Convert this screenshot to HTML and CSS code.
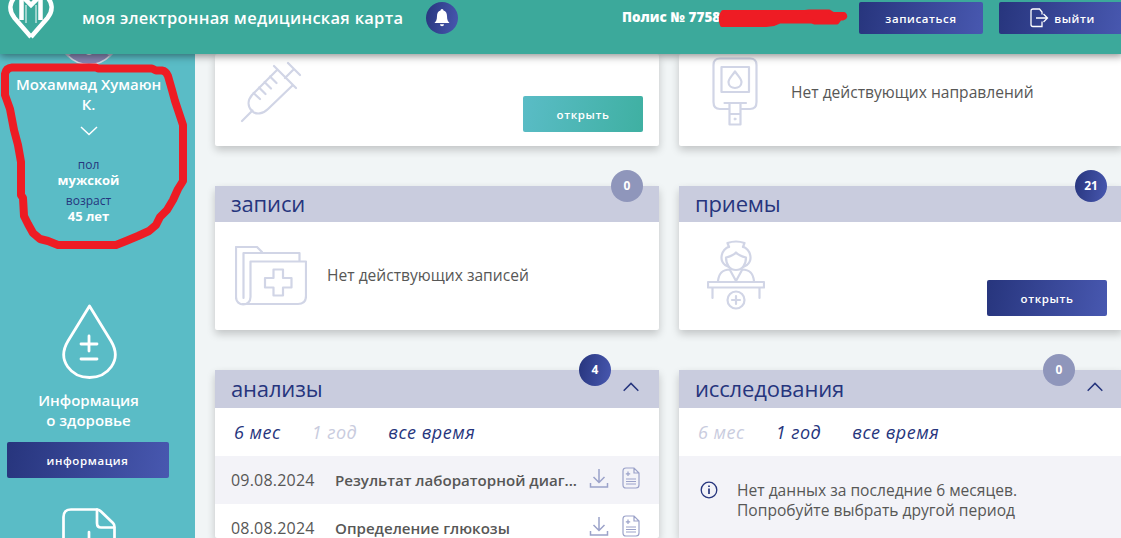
FILE: index.html
```html
<!DOCTYPE html>
<html lang="ru">
<head>
    <meta charset="UTF-8">
    <meta name="viewport" content="width=device-width, initial-scale=1.0">
    <title>Моя электронная медицинская карта</title>
    <link rel="stylesheet" href="styles.css">
</head>
<body>
<header class="header">
    <svg class="logo" width="46" height="42" viewBox="0 0 46 42" fill="none">
        <path d="M23 37 L6.500 18 C0 10 2 2 7 -3 M23 37 L39.500 18 C46 10 44 2 39 -3" stroke="#fff" stroke-width="4.500"/>
        <path d="M13.500 20 V-2 M32.500 20 V-2" stroke="#fff" stroke-width="4.500"/>
        <path d="M14 -4 L23 5 L32 -4" stroke="#fff" stroke-width="4.500"/>
        <path d="M18 23 V5 M28 23 V5" stroke="#fff" stroke-width="1"/>
    </svg>
    <div class="header-title">моя электронная медицинская карта</div>
    <div class="bell">
        <svg width="16" height="20" viewBox="0 0 16 20" fill="#fff">
            <path d="M8 1 a1.500 1.500 0 0 1 1.500 1.500 C12 3.200 13 5.500 13 8 c0 4 1 5.500 2.500 7 H.5 C2 13.500 3 12 3 8 c0-2.500 1-4.800 3.500-5.500 A1.500 1.500 0 0 1 8 1z"/>
            <path d="M6 16.200 h4 a2 2 0 0 1-4 0z"/>
        </svg>
    </div>
    <div class="policy">Полис № 7758</div>
    <button class="btn btn-sign">записаться</button>
    <button class="btn btn-exit">
        <svg width="19" height="20" viewBox="0 0 19 20" fill="none" stroke="#fff" stroke-width="1.300">
            <path d="M12 6.500 V4 L9.500 1 H3 Q1 1 1 3 V16.500 Q1 18.500 3 18.500 H12 V13.500 M6 10 H17.500 M13.500 6 L17.500 10 L13.500 14"/>
        </svg>
        <span>выйти</span>
    </button>
</header>

<div class="page">
    <!-- Patient sidebar -->
    <aside class="sidebar">
        <svg class="avatar" width="54" height="12" viewBox="0 0 54 12">
            <circle cx="27" cy="-19" r="29.500" fill="#8584b0" stroke="#d5d8e2" stroke-width="1.500"/>
            <path d="M3 0 H9 C7 1 6 2 8 4z M51 0 H45 C47 1 48 2 46 4z" fill="#b9b8cc"/>
            <path d="M24 0 h6 l-2 1h-2z" fill="#d5d8e2"/>
        </svg>
        <div class="patient-name">Мохаммад Хумаюн<br>К.</div>
        <svg class="toggle" width="18" height="10" viewBox="0 0 18 10" fill="none" stroke="#fff" stroke-width="1.500"><path d="M1 1 L9 8.500 L17 1"/></svg>
        <div class="label">пол</div>
        <div class="value">мужской</div>
        <div class="label">возраст</div>
        <div class="value">45 лет</div>

        <svg class="drop" width="56" height="78" viewBox="0 0 56 78" fill="none" stroke="#fff" stroke-width="2.800" stroke-linecap="round" stroke-linejoin="round">
            <path d="M28.500 3 L7 38 C-5 58 11 74.500 28.500 74.500 S62 58 50 38 Z"/>
            <path d="M28 33 V48 M20 41 H36 M20 56 H36"/>
        </svg>
        <div class="info-title">Информация<br>о здоровье</div>
        <button class="btn btn-info">информация</button>
        <svg class="doc" width="54" height="30" viewBox="0 0 54 30" fill="none" stroke="#fff" stroke-width="2.700" stroke-linecap="round">
            <path d="M1.500 34 V9 Q1.500 1.500 9 1.500 H35 Q37 1.500 39 3.500 L51 15 Q52.500 16.500 52.500 19 V34"/>
            <path d="M35 1.500 V15 Q35 19.500 39 19.500 H52 M27 24 V34"/>
        </svg>
    </aside>

    <main class="grid">
        <!-- Vaccination -->
        <section class="card card-cut">
            <svg class="icon icon-syringe" width="62" height="62" viewBox="0 0 62 62">
                <path d="M2 60 L12.500 49.500 M48 2 L60 14 M54 8 L45 17 M34 5 L56 27 M37 9 L12 34 C7 40 8 46 12 50 S23 53 28 48 L53 24 M13.500 32 L20 38 M19 26.500 L25.500 33 M24.500 21 L31 27.500 M30 15.500 L36.500 22"/>
            </svg>
            <button class="btn btn-open btn-green">открыть</button>
        </section>

        <!-- Referrals -->
        <section class="card card-cut">
            <svg class="icon icon-meter" width="46" height="70" viewBox="0 0 46 70">
                <path d="M17 52 H8 Q1.500 52 1.500 45 V8 Q1.500 1.500 8 1.500 H38 Q44.500 1.500 44.500 8 V45 Q44.500 52 38 52 H29"/>
                <path d="M9.500 10 H37 V35 H9.500z M12.500 46 H34 M17.500 47 V67.500 H28.500 V47 M17.500 57 H28.500"/>
                <path d="M23 14.500 C19 20 16.500 22 16.500 25 C16.500 33 29.500 33 29.500 25 C29.500 22 27 20 23 14.500z"/>
                <circle cx="23" cy="62" r="1" fill="#d1d5e6" stroke-width="1"/>
            </svg>
            <div class="empty">Нет действующих направлений</div>
        </section>

        <!-- Appointments -->
        <section class="card">
            <div class="card-head">записи<span class="badge badge-zero">0</span></div>
            <div class="card-body">
                <svg class="icon icon-folder" width="72" height="60" viewBox="0 0 72 60">
                    <path d="M8.500 52 V7 H64.500 V15 M1 51 V1 H22 L27 6 M1 51 C1 61 15.500 61 15.500 51 V15.500 H71 V50 Q71 58 63 58 H8"/>
                    <path d="M38.500 23.500 H48 V32 H56.500 V41.500 H48 V49.500 H38.500 V41.500 H30 V32 H38.500z"/>
                </svg>
                <div class="empty">Нет действующих записей</div>
            </div>
        </section>

        <!-- Visits -->
        <section class="card">
            <div class="card-head">приемы<span class="badge">21</span></div>
            <div class="card-body">
                <svg class="icon icon-doctor" width="58" height="70" viewBox="0 0 58 70">
                    <path d="M1 42 H57 V47.500 H1z M5.500 48 V58 M52.500 48 V58"/>
                    <circle cx="29" cy="60" r="8.500"/>
                    <path d="M29 56 V64 M25 60 H33"/>
                    <path d="M11 41 C12 33 15 30 23 29.500 M47 41 C46 33 43 30 35 29.500 M23 30 L29 41 L35 30"/>
                    <path d="M19 17.500 C23 16.500 27 15 29 12.500 C31 15 35 16.500 39 17.500 C39 25 35 30 29 30 S19 25 19 17.500z"/>
                    <path d="M22 7 L20.500 3 Q29 0 37.500 3 L36 7 M22 6.500 C14 10 12 20 18 25 L22 27 M36 6.500 C44 10 46 20 40 25 L36 27"/>
                </svg>
                <button class="btn btn-open">открыть</button>
            </div>
        </section>

        <!-- Tests -->
        <section class="card card-list">
            <div class="card-head card-head-tall">анализы
                <span class="badge badge-left">4</span>
                <svg class="arrow" width="16" height="10" viewBox="0 0 16 10"><path d="M.7 8.700 L8 1.400 L15.300 8.700"/></svg>
            </div>
            <div class="tabs">
                <span class="tab">6 мес</span>
                <span class="tab tab-off">1 год</span>
                <span class="tab">все время</span>
            </div>
            <div class="row row-grey">
                <span class="date">09.08.2024</span>
                <span class="name">Результат лабораторной диаг...</span>
                <svg class="action" width="20" height="22" viewBox="0 0 20 22"><path d="M10 2 V15 M4.500 10 L10 15.500 L15.500 10 M1.500 16 V20 H18.500 V16"/></svg>
                <svg class="action action-doc" width="18" height="22" viewBox="0 0 18 22"><path d="M4 1 H12 L17 6 V18 Q17 21 14 21 H4 Q1 21 1 18 V4 Q1 1 4 1z M12 1 V6 H17 M6 4.500 V9 M3.800 6.800 H8.200 M4 12 H14 M4 14.500 H14 M4 17 H14"/></svg>
            </div>
            <div class="row row-last">
                <span class="date">08.08.2024</span>
                <span class="name">Определение глюкозы</span>
                <svg class="action" width="20" height="22" viewBox="0 0 20 22"><path d="M10 2 V15 M4.500 10 L10 15.500 L15.500 10 M1.500 16 V20 H18.500 V16"/></svg>
                <svg class="action action-doc" width="18" height="22" viewBox="0 0 18 22"><path d="M4 1 H12 L17 6 V18 Q17 21 14 21 H4 Q1 21 1 18 V4 Q1 1 4 1z M12 1 V6 H17 M6 4.500 V9 M3.800 6.800 H8.200 M4 12 H14 M4 14.500 H14 M4 17 H14"/></svg>
            </div>
        </section>

        <!-- Examinations -->
        <section class="card card-list">
            <div class="card-head card-head-tall">исследования
                <span class="badge badge-zero badge-left">0</span>
                <svg class="arrow" width="16" height="10" viewBox="0 0 16 10"><path d="M.7 8.700 L8 1.400 L15.300 8.700"/></svg>
            </div>
            <div class="tabs">
                <span class="tab tab-off">6 мес</span>
                <span class="tab">1 год</span>
                <span class="tab">все время</span>
            </div>
            <div class="notice">
                <svg width="18" height="18" viewBox="0 0 18 18" fill="none" stroke="#26357d" stroke-width="1.300"><circle cx="9" cy="9" r="7.800"/><path d="M9 7.500 V13 M9 4.500 V6" stroke-width="1.700"/></svg>
                <div>Нет данных за последние 6 месяцев.<br>Попробуйте выбрать другой период</div>
            </div>
        </section>
    </main>
</div>

<!-- Marker strokes over the personal data -->
<svg class="marker" width="1121" height="260" viewBox="0 0 1121 260" fill="none" stroke="#ee1c24" stroke-linecap="round" stroke-linejoin="round">
    <path stroke-width="8" d="M5 88 V74 Q6 68 12 67.500 H96 L98 68.500 H152 L156 70.500 H162 Q166 71 168 76 L172 90 L175 101 L179 113 L183 125 V181 L178 189 L173 200 L167 210 L160 217 L156 225 L149 231 L138 236 L126 241 L116 245 H58 L48 241 L40 239 L33 233 L28 224 L24 216 L23 198 L21 195 V162 L18 145 L14 130 L10 109 L5 95z"/>
    <path fill="#ee1c24" stroke-width="4" d="M723 12 H805 L809 11.500 H829 L833 14 H844 Q847 17 843 18.500 H840 L837 22.500 H815 L812 21.500 H780 L774 24 L766 25 H722 Q719 17 723 12z"/>
</svg>
</body>
</html>
```
FILE: styles.css
```css
body {
    font-family: "Open Sans", "Noto Sans", sans-serif;
    margin: 0;
    width: 1121px;
    height: 538px;
    overflow: hidden;
    background-color: #f1f5f6;
    color: #575756;
    font-size: 15.6px;
}
.header {
    position: relative;
    z-index: 2;
    display: flex;
    align-items: flex-start;
    width: 1123px;
    height: 54px;
    background: #3ca99b;
    box-shadow: 0 2px 8px rgba(0, 0, 0, 0.45);
    color: #fff;
}
.logo {
    margin-left: 8px;
    flex: none;
}
.header-title {
    margin: 6px 0 0 28px;
    width: 344px;
    line-height: 24px;
    font-size: 16.5px;
    font-weight: 600;
    letter-spacing: 0.27px;
    white-space: nowrap;
}
.bell {
    margin-top: 2px;
    width: 32px;
    height: 32px;
    border-radius: 50%;
    background: linear-gradient(100deg, #27357d, #4858b0);
    display: flex;
    align-items: center;
    justify-content: center;
}
.policy {
    margin: 7px 0 0 164px;
    width: 237px;
    line-height: 20px;
    font-size: 13.5px;
    font-weight: 800;
    white-space: nowrap;
}
.btn {
    flex: none;
    box-sizing: border-box;
    padding: 0;
    border: none;
    border-radius: 2px;
    background: linear-gradient(100deg, #27357d, #4858b0);
    color: #fff;
    font-family: inherit;
    font-size: 11.5px;
    font-weight: 600;
    letter-spacing: 0.6px;
}
.btn-sign {
    margin: 2px 16px 0 0;
    width: 124px;
    height: 32px;
}
.btn-exit {
    margin-top: 2px;
    padding-left: 3px;
    width: 124px;
    height: 32px;
    display: flex;
    align-items: center;
    justify-content: center;
    gap: 5px;
}
.page {
    display: flex;
    height: 484px;
    overflow: hidden;
}
.sidebar {
    flex: none;
    width: 177px;
    padding-right: 18px;
    background: #5abcc6;
    display: flex;
    flex-direction: column;
    align-items: center;
    color: #fff;
    text-align: center;
}
.sidebar svg {
    flex: none;
}
.patient-name {
    margin-top: 8px;
    line-height: 20px;
    font-size: 15px;
    font-weight: 600;
    letter-spacing: -0.05px;
    white-space: nowrap;
}
.toggle {
    margin: 12px 0 21px;
}
.label {
    line-height: 16px;
    height: 15px;
    font-size: 12px;
    color: #26357d;
}
.value {
    height: 21px;
    line-height: 16px;
    font-size: 13px;
    font-weight: 700;
}
.drop {
    margin-top: 74px;
}
.info-title {
    margin-top: 9px;
    line-height: 20px;
    font-size: 15px;
    font-weight: 600;
}
.btn-info {
    margin: 12px 0 30px;
    width: 162px;
    height: 36px;
    position: relative;
    left: -1px;
}
.grid {
    flex: none;
    display: grid;
    grid-template-columns: 444px 444px;
    grid-template-rows: 92px 144px 168px;
    gap: 40px 20px;
    padding-left: 20px;
}
.card {
    background: #fff;
    border-radius: 2px;
    box-shadow: 0 4px 8px rgba(0, 0, 0, 0.2);
}
.card-cut {
    display: flex;
    align-items: flex-start;
}
.card-head {
    position: relative;
    box-sizing: border-box;
    height: 36px;
    padding-left: 16px;
    line-height: 35px;
    background: #c9ccde;
    color: #26357d;
    font-size: 22px;
    letter-spacing: -0.15px;
}
.card-head-tall {
    height: 38px;
    line-height: 37px;
}
.badge {
    position: absolute;
    top: -16px;
    right: 16px;
    width: 32px;
    height: 32px;
    border-radius: 50%;
    background: linear-gradient(100deg, #27357d, #4858b0);
    color: #fff;
    font-size: 12px;
    font-weight: 700;
    line-height: 32px;
    letter-spacing: 0;
    text-align: center;
}
.badge-zero {
    background: #8f96bb;
}
.badge-left {
    right: 48px;
}
.arrow {
    position: absolute;
    top: 12px;
    right: 20px;
    fill: none;
    stroke: #26357d;
    stroke-width: 1.5;
}
.card-body {
    display: flex;
    align-items: flex-start;
    height: 108px;
}
.icon {
    flex: none;
    fill: none;
    stroke: #d1d5e6;
    stroke-width: 2.2;
    stroke-linecap: round;
    stroke-linejoin: round;
}
.icon-syringe {
    margin: 7px 0 0 25px;
}
.icon-meter {
    margin: 3px 33px 0;
}
.icon-folder {
    margin: 24px 20px 0;
}
.icon-doctor {
    margin: 18px 0 0 28px;
}
.empty {
    line-height: 24px;
    white-space: nowrap;
}
.card-cut .empty {
    margin-top: 26px;
}
.card-body .empty {
    margin-top: 41px;
}
.btn-open {
    margin: 58px 16px 0 auto;
    width: 120px;
    height: 36px;
}
.btn-green {
    margin-top: 42px;
    background: linear-gradient(100deg, #5abcc6, #3fb0a2);
}
.tabs {
    display: flex;
    gap: 31px;
    padding-left: 19px;
    height: 48px;
    line-height: 48px;
    color: #26357d;
    font-size: 18px;
    font-style: italic;
    letter-spacing: 0.5px;
}
.tab-off {
    color: #c9ccde;
}
.row {
    display: flex;
    align-items: center;
    height: 48px;
    padding-left: 16px;
}
.row-last {
    height: 34px;
    align-items: flex-start;
}
.row-last .date,
.row-last .name {
    line-height: 22px;
    margin-top: 13px;
}
.row-last .action {
    margin-top: 11px;
}
.row-grey,
.notice {
    background: #f3f3f8;
}
.date {
    width: 104px;
    font-size: 16px;
    letter-spacing: 0.2px;
}
.name {
    width: 243px;
    margin-right: 11px;
    font-weight: 600;
    font-size: 15.1px;
    white-space: nowrap;
}
.action {
    margin: -4px 13px 0 0;
    fill: none;
    stroke: #9ba2c9;
    stroke-width: 1.5;
}
.action-doc {
    margin-right: 0;
    stroke-width: 1.2;
}
.notice {
    display: flex;
    box-sizing: border-box;
    gap: 19px;
    height: 82px;
    padding: 24px 0 0 21px;
    line-height: 20px;
    white-space: nowrap;
}
.notice svg {
    margin-top: 1px;
}
.marker {
    position: absolute;
    top: 0;
    left: 0;
    z-index: 3;
}
```
